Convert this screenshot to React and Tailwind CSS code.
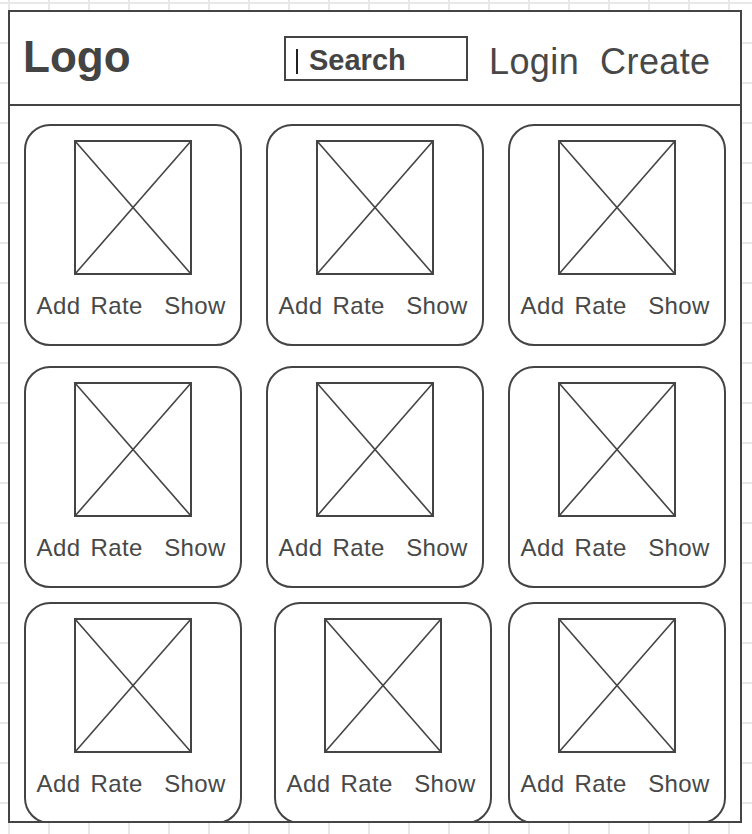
const font = { fontFamily: '"Liberation Sans", Arial, sans-serif' };

function Placeholder() {
  return (
    <svg width="118" height="135" viewBox="0 0 118 135" className="mx-auto mt-[14px] block">
      <rect x="1" y="1" width="116" height="133" fill="white" stroke="#444" strokeWidth="2" />
      <line x1="1" y1="1" x2="117" y2="134" stroke="#444" strokeWidth="1.6" />
      <line x1="117" y1="1" x2="1" y2="134" stroke="#444" strokeWidth="1.6" />
    </svg>
  );
}

function Card({ className = "" }) {
  return (
    <div className={`w-[218px] h-[222px] shrink-0 border-2 border-[#444] rounded-[26px] bg-white ${className}`}>
      <Placeholder />
      <div className="flex mt-[18px] text-[24px] leading-[26px] tracking-[0.4px] text-[#484848]">
        <span className="ml-[10.5px]">Add</span>
        <span className="ml-[10px]">Rate</span>
        <span className="ml-[21.5px]">Show</span>
      </div>
    </div>
  );
}

export default function App() {
  return (
    <div
      className="h-[834px] w-full overflow-hidden pt-[10px] pl-[8px] bg-white bg-[linear-gradient(to_right,#e8e8e8_2px,transparent_2px),linear-gradient(to_bottom,#e8e8e8_2px,transparent_2px)] bg-[size:40px_40px] bg-[position:8px_2px]"
      style={font}
    >
      <div className="w-[734px] h-[813px] border-2 border-[#444] bg-white overflow-hidden">
        <header className="flex items-start h-[94px] border-b-2 border-[#444]">
          <div className="w-[261px] ml-[13px] mt-[23px] text-[44px] leading-[44px] font-bold text-[#444]">
            Logo
          </div>
          <div className="flex items-start w-[184px] h-[45px] mt-[24px] border-2 border-[#444]">
            <div className="w-[2px] h-[25px] ml-[10px] mt-[11px] bg-[#222]" />
            <span className="ml-[11px] mt-[8px] text-[29px] leading-[29px] font-bold text-[#444]">
              Search
            </span>
          </div>
          <span className="ml-[21px] mt-[32px] text-[36px] leading-[35px] tracking-[0.4px] text-[#484848]">Login</span>
          <span className="ml-[21px] mt-[32px] text-[36px] leading-[35px] tracking-[0.4px] text-[#484848]">Create</span>
        </header>
        <div className="pl-[14px] pt-[18px]">
          <div className="flex gap-[24px]">
            <Card />
            <Card />
            <Card />
          </div>
          <div className="flex gap-[24px] mt-[20px]">
            <Card />
            <Card />
            <Card />
          </div>
          <div className="flex mt-[14px]">
            <Card />
            <Card className="ml-[32px]" />
            <Card className="ml-[16px]" />
          </div>
        </div>
      </div>
    </div>
  );
}
